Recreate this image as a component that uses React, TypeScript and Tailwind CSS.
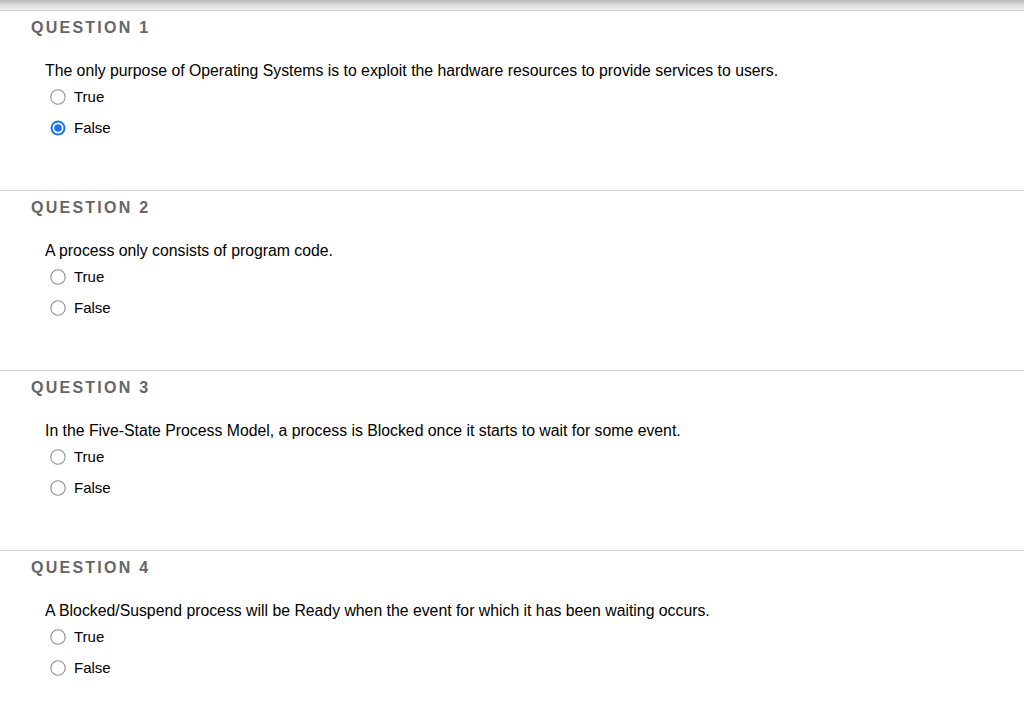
import React from 'react'

interface Question {
  id: number
  text: string
  answer?: 'True' | 'False'
}

const QUESTIONS: Question[] = [
  {
    id: 1,
    text: 'The only purpose of Operating Systems is to exploit the hardware resources to provide services to users.',
    answer: 'False',
  },
  { id: 2, text: 'A process only consists of program code.' },
  {
    id: 3,
    text: 'In the Five-State Process Model, a process is Blocked once it starts to wait for some event.',
  },
  {
    id: 4,
    text: 'A Blocked/Suspend process will be Ready when the event for which it has been waiting occurs.',
  },
]

// macOS-style radio button
const Radio = ({ checked }: { checked: boolean }) =>
  checked ? (
    <svg width="16" height="16" viewBox="0 0 16 16">
      <circle cx="8" cy="8" r="7.5" fill="#1a73f0" />
      <circle cx="8" cy="8" r="5.5" fill="#ffffff" />
      <circle cx="8" cy="8" r="3.8" fill="#1a73f0" />
    </svg>
  ) : (
    <svg width="16" height="16" viewBox="0 0 16 16">
      <circle cx="8" cy="8" r="7.2" fill="#ffffff" stroke="#909090" strokeWidth="1.1" />
    </svg>
  )

const QuestionBlock = ({ q }: { q: Question }) => (
  <div className="h-[180px] border-t border-[#d3d3d3]">
    <div className="pl-[31px] pt-[7px] text-[16px] leading-[20px] font-bold tracking-[0.14em] text-[#666666]">
      QUESTION {q.id}
    </div>
    <div className="pl-[45px] pt-[23px] text-[15.8px] leading-[20px] text-black">{q.text}</div>
    <div className="mt-[6px] flex flex-col gap-[11px] pl-[50px]">
      {(['True', 'False'] as const).map((opt) => (
        <label key={opt} className="flex items-center gap-[8px] h-[20px] text-[15px] text-black">
          <Radio checked={q.answer === opt} />
          <span>{opt}</span>
        </label>
      ))}
    </div>
  </div>
)

export default function App() {
  return (
    <div className="w-[1024px] h-[719px] overflow-hidden bg-white font-['Liberation_Sans',Arial,sans-serif]">
      <div className="h-[10px] bg-gradient-to-b from-[#b8b8b8] via-[#dedede] to-[#ececec]" />
      {QUESTIONS.map((q) => (
        <QuestionBlock key={q.id} q={q} />
      ))}
    </div>
  )
}
